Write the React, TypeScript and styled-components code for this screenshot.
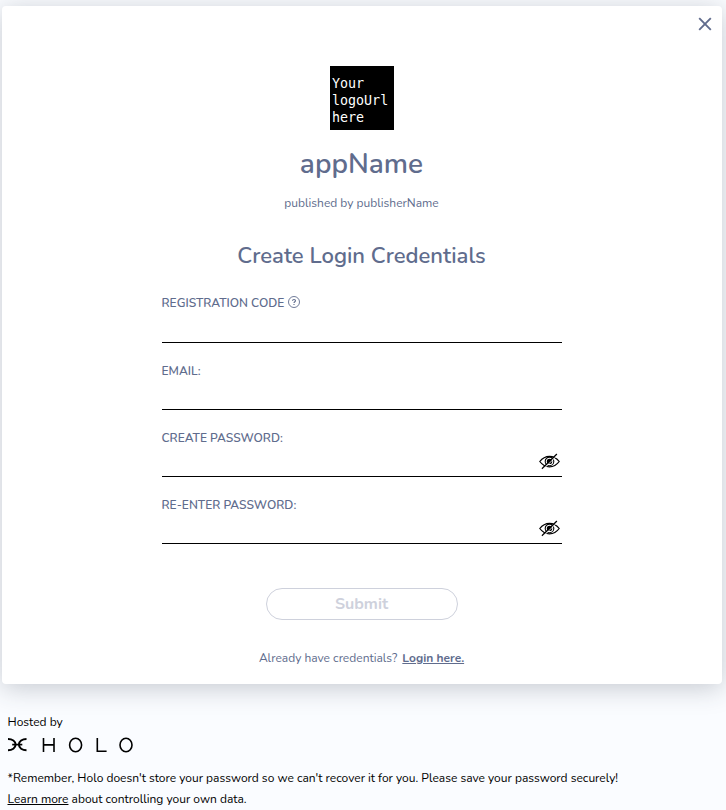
import React from 'react';
import styled, { createGlobalStyle } from 'styled-components';

const GlobalStyle = createGlobalStyle`
  *, *::before, *::after { box-sizing: border-box; }
  body {
    margin: 0;
    height: 810px;
    overflow: hidden;
    background: #fafcff;
    font-family: Nunito, Lato, sans-serif;
    font-size: 12px;
    color: #000;
  }
`;

const Page = styled.div`
  display: flex;
  flex-direction: column;
  height: 810px;
  padding: 6px 4.5px 0 1.5px;
`;

const Card = styled.main`
  display: flex;
  flex-direction: column;
  align-items: center;
  height: 678px;
  flex-shrink: 0;
  border-radius: 4px;
  background: #fff;
  color: #606c8d;
  box-shadow: 0 4px 26px rgba(44, 50, 69, 0.25);
`;

const CloseRow = styled.div`
  display: flex;
  justify-content: flex-end;
  align-self: stretch;
  height: 60px;
  padding: 11px 10px 0 0;
`;

const CloseButton = styled.button`
  width: 14px;
  height: 14px;
  padding: 0;
  border: 0;
  background: none;
  color: #606c8d;
  svg { display: block; }
`;

const AppLogo = styled.div`
  width: 64px;
  height: 64px;
  padding: 9px 0 0 2.5px;
  background: #000;
  color: #fff;
  font: 13.33px/17px "DejaVu Sans Mono", monospace;
  white-space: pre-line;
`;

const AppName = styled.h1`
  margin: 15px 0 0;
  font-size: 28px;
  line-height: 38px;
  font-weight: 600;
`;

const Publisher = styled.p`
  margin: 12px 0 0;
  line-height: 16px;
`;

const Title = styled.h2`
  margin: 30px 0 0;
  font-size: 22px;
  line-height: 30px;
  font-weight: 600;
`;

const Form = styled.form`
  display: flex;
  flex-direction: column;
  width: 400px;
  margin-top: 24px;
`;

const Field = styled.div<{ $height?: number }>`
  display: flex;
  flex-direction: column;
  height: ${(p) => p.$height ?? 67}px;
`;

const Label = styled.label`
  display: flex;
  align-items: center;
  gap: 4px;
  height: 16px;
  line-height: 16px;
  font-weight: 600;
  svg { margin-top: -2px; }
`;

const InputRow = styled.div<{ $height?: number }>`
  display: flex;
  align-items: center;
  height: ${(p) => p.$height ?? 31}px;
  padding-right: 2px;
  border-bottom: 1px solid #000;
  svg { margin-top: 1px; }
`;

const Input = styled.input`
  flex: 1;
  min-width: 0;
  border: 0;
  outline: 0;
  background: none;
  font: inherit;
`;

const Submit = styled.button`
  width: 192px;
  height: 32px;
  margin-top: 24px;
  padding: 0 0 1px;
  align-self: center;
  border: 1px solid #ced1dc;
  border-radius: 16px;
  background: #fff;
  color: #ced1dc;
  font: 700 16px/22px Nunito, Lato, sans-serif;
`;

const LoginPrompt = styled.p`
  display: flex;
  gap: 5px;
  margin: 30px 0 0;
  line-height: 16px;
  justify-content: center;
`;

const LoginLink = styled.a`
  font-weight: 700;
  text-decoration: underline;
`;

const Footer = styled.footer`
  display: flex;
  flex-direction: column;
  padding: 30px 0 0 6px;
  line-height: 16px;
`;

const HoloLogo = styled.svg`
  margin-top: 7px;
  display: block;
`;

const Note = styled.p`
  margin: 15px 0 0;
  line-height: 21px;
  white-space: nowrap;
`;

const LearnMore = styled.a`
  text-decoration: underline;
`;

const CloseIcon = () => (
  <svg width="14" height="14" viewBox="0 0 14 14" stroke="currentColor" strokeWidth="1.9">
    <path d="M1.2 1.2 12.8 12.8M12.8 1.2 1.2 12.8" />
  </svg>
);

const HelpIcon = () => (
  <svg width="12" height="12" viewBox="0 0 12 12" fill="none" stroke="#606c8d">
    <circle cx="6" cy="6" r="5.5" strokeWidth="0.9" />
    <path d="M4.5 4.8C4.5 3.1 7.5 3.1 7.5 4.8 7.5 5.8 6 5.8 6 7.1M6 8.1v1" strokeWidth="1.1" />
  </svg>
);

const EyeOffIcon = () => (
  <svg width="21" height="17" viewBox="0 0 21 17" fill="none" stroke="#000">
    <path d="M.8 8.5C6 1.5 15 1.5 20.2 8.5 15 15.5 6 15.5.8 8.5Z" strokeWidth="1.25" />
    <circle cx="10.5" cy="8.4" r="4.3" strokeWidth="1.1" />
    <circle cx="10.5" cy="8.4" r="2.7" fill="#000" stroke="none" />
    <path d="M4 16.4 18.8 1.8" stroke="#fff" strokeWidth="1" />
    <path d="M2.9 15.7 17.9 1" strokeWidth="1.2" />
  </svg>
);

const HoloMark = () => (
  <HoloLogo width="126" height="16" viewBox="0 0 126 16" fill="none" stroke="#000">
    <path d="M0 1.9C4.2 1.9 7.6 4.2 7.6 7.6S4.2 13.3 0 13.3M18.5 1.9C14.3 1.9 10.9 4.2 10.9 7.6s3.4 5.7 7.6 5.7" strokeWidth="2" />
    <path d="M4.2 7.6h10.1" strokeWidth="1.7" />
    <path d="M35.5 1v14M46 1v14M35.5 7.9h10.5M89.3 1v13.3h9.3" strokeWidth="1.6" />
    <ellipse cx="67.6" cy="8" rx="6" ry="6.7" strokeWidth="1.6" />
    <ellipse cx="118" cy="8" rx="6" ry="6.7" strokeWidth="1.6" />
  </HoloLogo>
);

export default function App() {
  return (
    <Page>
      <GlobalStyle />
      <Card>
        <CloseRow>
          <CloseButton type="button" aria-label="Close"><CloseIcon /></CloseButton>
        </CloseRow>
        <AppLogo>{'Your\nlogoUrl\nhere'}</AppLogo>
        <AppName>appName</AppName>
        <Publisher>published by publisherName</Publisher>
        <Title>Create Login Credentials</Title>
        <Form>
          <Field $height={68}>
            <Label htmlFor="code">REGISTRATION CODE <HelpIcon /></Label>
            <InputRow $height={32}><Input id="code" /></InputRow>
          </Field>
          <Field>
            <Label htmlFor="email">EMAIL:</Label>
            <InputRow><Input id="email" type="email" /></InputRow>
          </Field>
          <Field>
            <Label htmlFor="password">CREATE PASSWORD:</Label>
            <InputRow><Input id="password" type="password" /><EyeOffIcon /></InputRow>
          </Field>
          <Field>
            <Label htmlFor="confirm">RE-ENTER PASSWORD:</Label>
            <InputRow><Input id="confirm" type="password" /><EyeOffIcon /></InputRow>
          </Field>
          <Submit type="button" disabled>Submit</Submit>
        </Form>
        <LoginPrompt>
          <span>Already have credentials?</span>
          <LoginLink>Login here.</LoginLink>
        </LoginPrompt>
      </Card>
      <Footer>
        <span>Hosted by</span>
        <HoloMark />
        <Note>
          *Remember, Holo doesn't store your password so we can't recover it for you. Please save your password securely!
          <br />
          <LearnMore>Learn more</LearnMore> about controlling your own data.
        </Note>
      </Footer>
    </Page>
  );
}
